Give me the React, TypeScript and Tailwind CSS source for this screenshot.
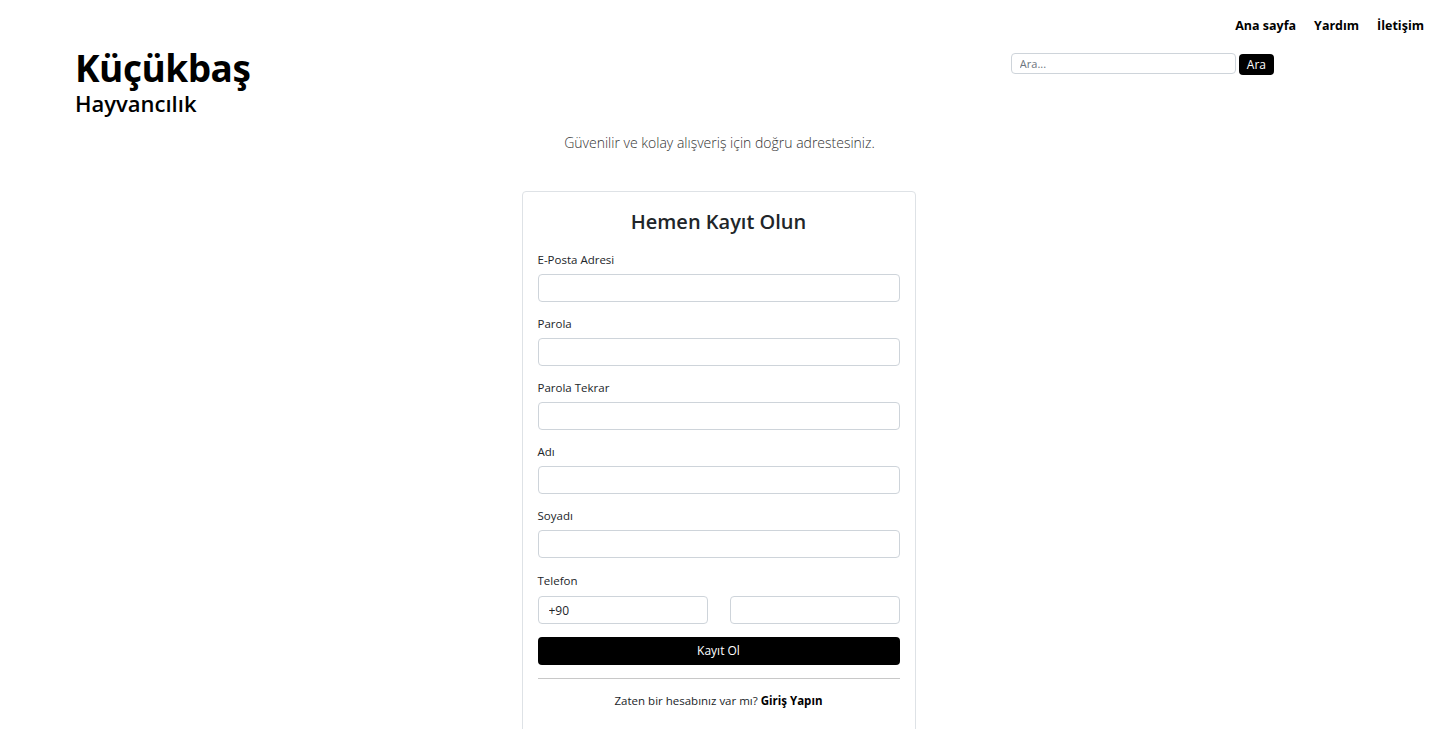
const fields = ["E-Posta Adresi", "Parola", "Parola Tekrar", "Adı", "Soyadı"];

function Field({ label, last }: { label: string; last?: boolean }) {
  return (
    <div className={last ? "mb-[14px]" : "mb-[13px]"}>
      <label className="block text-[11.5px] leading-[18px] text-[#212529] mb-[5px]">{label}</label>
      <input className="block w-full h-[28px] rounded border border-[#ced4da] px-3 text-[12px] outline-none" />
    </div>
  );
}

export default function App() {
  return (
    <div className="min-h-screen bg-white text-black font-['Open_Sans',sans-serif]">
      <nav className="flex justify-end gap-[18px] pt-[16px] pr-[15px] text-[12.5px] font-bold leading-[20px]">
        <a href="#">Ana sayfa</a>
        <a href="#">Yardım</a>
        <a href="#">İletişim</a>
      </nav>

      <header className="flex items-start justify-between pl-[75px] pr-[165px] mt-[6px]">
        <div className="mt-[4px]">
          <h1 className="text-[37px] font-bold leading-[44px] tracking-[-0.5px]">Küçükbaş</h1>
          <h2 className="text-[22px] font-semibold leading-[24px] mt-[1px]">Hayvancılık</h2>
        </div>
        <form className="flex items-start gap-[3px] mt-[11px]" onSubmit={(e) => e.preventDefault()}>
          <input
            placeholder="Ara..."
            className="w-[225px] h-[21px] rounded border border-[#ced4da] px-2 text-[11px] placeholder:text-[#6c757d] outline-none"
          />
          <button className="h-[21px] mt-[1px] rounded bg-black px-[8px] text-[12px] text-white leading-none">Ara</button>
        </form>
      </header>

      <p className="mt-[17px] text-center text-[14px] font-light text-[#333]">
        Güvenilir ve kolay alışveriş için doğru adrestesiniz.
      </p>

      <div className="mx-auto mt-[38px] w-[394px] -translate-x-[1px] rounded border border-[#dee2e6] px-[15px] pt-[15px] pb-[40px]">
        <h3 className="text-center text-[20px] font-semibold text-[#212529] mb-[14px]">Hemen Kayıt Olun</h3>
        <form onSubmit={(e) => e.preventDefault()}>
          {fields.map((f, i) => (
            <Field key={f} label={f} last={i === fields.length - 1} />
          ))}
          <div className="mb-[13px]">
            <label className="block text-[11.5px] leading-[18px] text-[#212529] mb-[6px]">Telefon</label>
            <div className="flex gap-[22px]">
              <input
                defaultValue="+90"
                className="w-[170px] h-[28px] rounded border border-[#ced4da] px-[10px] text-[12px] text-[#212529] outline-none"
              />
              <input className="w-[170px] h-[28px] rounded border border-[#ced4da] px-3 text-[12px] outline-none" />
            </div>
          </div>
          <button className="w-full h-[28px] rounded bg-black text-[12px] text-white">Kayıt Ol</button>
        </form>
        <hr className="mt-[13px] border-t border-[#c8c8c8]" />
        <p className="mt-[13px] text-center text-[11.5px] text-[#212529]">
          Zaten bir hesabınız var mı? <a href="#" className="font-bold text-black">Giriş Yapın</a>
        </p>
      </div>
    </div>
  );
}
